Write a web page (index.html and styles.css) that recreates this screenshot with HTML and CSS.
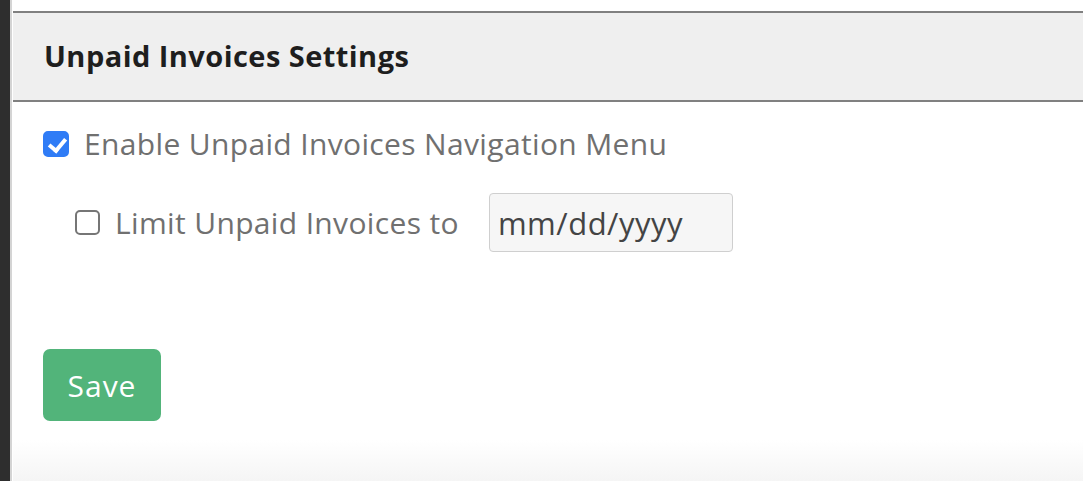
FILE: index.html
```html
<!DOCTYPE html>
<html lang="en">
<head>
  <meta charset="UTF-8">
  <meta name="viewport" content="width=device-width, initial-scale=1.0">
  <title>Unpaid Invoices Settings</title>
  <link rel="stylesheet" href="styles.css">
</head>
<body>
  <div class="layout">
    <div class="sidebar"></div>
    <main class="main">
      <section class="settings">
        <div class="settings-header">
          <h2>Unpaid Invoices Settings</h2>
        </div>
        <form class="settings-body">
          <label class="check-row">
            <input type="checkbox" class="check" checked>
            <span>Enable Unpaid Invoices Navigation Menu</span>
          </label>
          <div class="limit-row">
            <label class="check-row">
              <input type="checkbox" class="check">
              <span>Limit Unpaid Invoices to</span>
            </label>
            <input type="text" class="date-input" placeholder="mm/dd/yyyy">
          </div>
          <div class="actions">
            <button type="button" class="save-btn">Save</button>
          </div>
        </form>
      </section>
    </main>
  </div>
</body>
</html>
```

FILE: styles.css
```css
html, body {
  margin: 0;
  height: 100%;
}
body {
  font-family: "Open Sans", Lato, sans-serif;
  background: #fff;
}
.layout {
  display: flex;
  height: 100%;
}
.sidebar {
  width: 10px;
  background: #2e2e2e;
  border-right: 2px solid #d4d4d4;
  flex-shrink: 0;
}
.main {
  flex: 1;
  padding-top: 11px;
  background: linear-gradient(to bottom, #fff 0, #fff 440px, #f5f5f5 100%);
  margin-left: 1px;
}
.settings-header {
  background: #efefef;
  border-top: 2px solid #808080;
  border-bottom: 2px solid #808080;
  height: 87px;
  display: flex;
  align-items: center;
  padding-left: 31px;
}
.settings-header h2 {
  margin: 0;
  font-size: 29px;
  letter-spacing: 0.45px;
  line-height: 1.2;
  font-weight: 700;
  color: #1e1e1e;
}
.settings-body {
  padding: 24px 0 0 30px;
}
.check-row {
  display: flex;
  align-items: center;
  gap: 15px;
  font-size: 30px;
  letter-spacing: 0.35px;
  line-height: 1.2;
  color: #707070;
}
.check {
  appearance: none;
  -webkit-appearance: none;
  margin: 0;
  width: 26px;
  height: 26px;
  border: 2px solid #767676;
  border-radius: 5px;
  background: #fff;
  position: relative;
  flex-shrink: 0;
}
.check:checked {
  background: #2f7cf6;
  border-color: #2f7cf6;
}
.check:checked::after {
  content: "";
  position: absolute;
  left: 7px;
  top: 2px;
  width: 7px;
  height: 13px;
  border: solid #fff;
  border-width: 0 4px 4px 0;
  transform: rotate(40deg);
}
.limit-row {
  display: flex;
  align-items: center;
  gap: 30px;
  margin-top: 31px;
  padding-left: 32px;
}
.limit-row .check {
  width: 25px;
  height: 25px;
}
.date-input {
  width: 244px;
  height: 59px;
  box-sizing: border-box;
  border: 1px solid #cfcfcf;
  border-radius: 4px;
  background: #f6f6f6;
  font-family: inherit;
  font-size: 31px;
  letter-spacing: 0.5px;
  color: #444;
  padding: 0 8px;
}
.date-input::placeholder {
  color: #444;
}
.actions {
  margin-top: 97px;
}
.save-btn {
  width: 118px;
  height: 72px;
  border: none;
  border-radius: 7px;
  background: #52b47a;
  color: #fff;
  font-family: inherit;
  font-size: 30px;
  letter-spacing: 1px;
}
```
